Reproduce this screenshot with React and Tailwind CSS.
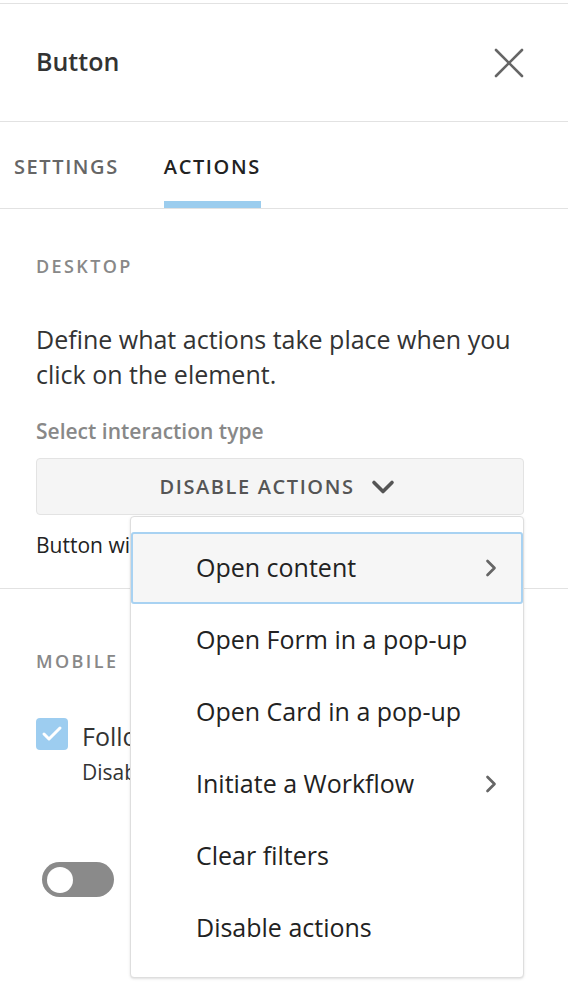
import { useState } from "react";
import { X, ChevronDown, ChevronRight, Check } from "lucide-react";

const font = { fontFamily: '"Open Sans", "Liberation Sans", sans-serif' };

const interactionTypes = [
  { label: "Open content", sub: true },
  { label: "Open Form in a pop-up" },
  { label: "Open Card in a pop-up" },
  { label: "Initiate a Workflow", sub: true },
  { label: "Clear filters" },
  { label: "Disable actions" },
];

const App = () => {
  const [tab, setTab] = useState("actions");
  const [open, setOpen] = useState(true);
  const [active, setActive] = useState(0);

  return (
    <div style={font} className="w-[568px] h-[1008px] bg-white text-[#333] overflow-hidden">
      <div className="pt-[3px]">
        {/* Header */}
        <div className="flex items-center justify-between h-[119px] pl-9 pr-[33px] border-t border-b border-[#e2e2e2]">
          <h2 className="text-[25px] font-semibold text-[#333] leading-none pb-[2px]">Button</h2>
          <button className="text-[#666]">
            <X className="w-[52px] h-[52px]" strokeWidth={1.2} />
          </button>
        </div>

        {/* Tabs */}
        <div className="flex items-end h-[87px] px-[14px] gap-[45px] border-b border-[#e2e2e2]">
          {[
            ["settings", "SETTINGS"],
            ["actions", "ACTIONS"],
          ].map(([key, label]) => (
            <button
              key={key}
              onClick={() => setTab(key)}
              className={`h-full flex flex-col justify-end text-[20px] tracking-[1.6px] font-semibold ${
                tab === key ? "text-[#222]" : "text-[#666]"
              }`}
            >
              <span className="pb-[19px]">{label}</span>
              <span className={`h-[7px] w-full ${tab === key ? "bg-[#9ccdee]" : "bg-transparent"}`} />
            </button>
          ))}
        </div>

        {/* Desktop */}
        <div className="pl-9 pr-[44px] pt-[45px] pb-[29px] border-b border-[#e2e2e2]">
          <p className="text-[18px] font-semibold tracking-[2.4px] text-[#888] leading-[24px]">DESKTOP</p>
          <p className="mt-[44px] text-[25px] leading-[35px] text-[#333]">
            Define what actions take place when you click on the element.
          </p>
          <p className="mt-[25px] text-[21px] font-semibold text-[#888] leading-[28px]">Select interaction type</p>

          <div className="relative mt-[13px]">
            <button
              onClick={() => setOpen(!open)}
              className="w-full h-[57px] flex items-center justify-center gap-[10px] rounded-[4px] bg-[#f5f5f5] border border-[#e3e3e3] text-[20px] font-semibold tracking-[1.6px] text-[#555]"
            >
              <span>DISABLE ACTIONS</span>
              <ChevronDown className="w-[36px] h-[36px] text-[#555]" strokeWidth={2.4} />
            </button>

            {open && (
              <ul className="absolute z-10 top-[calc(100%+1px)] left-[94px] right-0 bg-white border border-[#dedede] rounded-[4px] shadow-sm pt-[15px] pb-[13px]">
                {interactionTypes.map((item, i) => (
                  <li
                    key={item.label}
                    onMouseEnter={() => setActive(i)}
                    className={`h-[72px] flex items-center justify-between pl-[63px] pr-[16px] rounded-[3px] text-[25px] text-[#222] cursor-pointer border-2 ${
                      active === i ? "bg-[#f6f6f6] border-[#a8d2f2]" : "border-transparent"
                    }`}
                  >
                    <span>{item.label}</span>
                    {item.sub && <ChevronRight className="w-[28px] h-[28px] text-[#666]" strokeWidth={2.3} />}
                  </li>
                ))}
              </ul>
            )}
          </div>

          <p className="mt-[16px] text-[21px] leading-[28px] text-[#222]">Button will not respond to clicks.</p>
        </div>

        {/* Mobile */}
        <div className="px-9 pt-[60px]">
          <p className="text-[18px] font-semibold tracking-[2.4px] text-[#888] leading-[24px]">MOBILE</p>
          <div className="mt-[45px] flex gap-[14px]">
            <span className="w-[32px] h-[32px] rounded-[4px] bg-[#9dcdf0] flex items-center justify-center shrink-0">
              <Check className="w-[24px] h-[24px] text-white" strokeWidth={3} />
            </span>
            <div>
              <p className="text-[25px] leading-[36px] text-[#333]">Follow desktop settings</p>
              <p className="text-[21px] leading-[36px] text-[#333]">Disable actions</p>
            </div>
          </div>
          <div className="mt-[72px] ml-[6px] w-[72px] h-[35px] rounded-full bg-[#8a8a8a] flex items-center px-[5px]">
            <span className="w-[26px] h-[26px] rounded-full bg-white" />
          </div>
        </div>
      </div>
    </div>
  );
};

export default App;
